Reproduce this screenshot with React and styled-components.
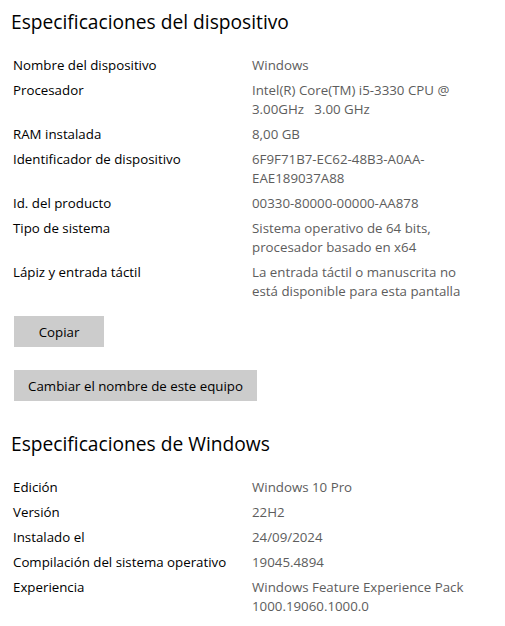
import React from 'react';
import styled, { createGlobalStyle } from 'styled-components';

const GlobalStyle = createGlobalStyle`
  html, body {
    margin: 0;
    padding: 0;
    background: #fff;
  }
  body {
    font-family: 'Open Sans', 'Noto Sans', sans-serif;
    color: #000;
  }
`;

const Page = styled.div`
  width: 505px;
  height: 626px;
  box-sizing: border-box;
  padding: 8px 0 0 13px;
  overflow: hidden;
`;

const Title = styled.h2`
  margin: ${p => p.$top}px 0 0 -2px;
  font-size: 19.2px;
  line-height: 28px;
  font-weight: 400;
`;

const SpecList = styled.dl`
  margin: ${p => p.$top}px 0 0 0;
  display: flex;
  flex-direction: column;
  gap: 6px;
  font-size: 13.3px;
  line-height: 19px;
`;

const Row = styled.div`
  display: grid;
  grid-template-columns: 239px 230px;
`;

const Label = styled.dt`
  margin: 0;
`;

const Value = styled.dd`
  margin: 0;
  color: #5d5d5d;
  white-space: pre;
`;

const Line = styled.span`
  display: block;
`;

const Button = styled.button`
  display: block;
  margin: ${p => p.$top}px 0 0 1px;
  width: ${p => p.$width}px;
  height: 31px;
  padding: 0;
  border: none;
  background: #cccccc;
  color: #000;
  font-family: inherit;
  font-size: 13.3px;
`;

const device = [
  ['Nombre del dispositivo', ['Windows']],
  ['Procesador', ['Intel(R) Core(TM) i5-3330 CPU @', '3.00GHz   3.00 GHz']],
  ['RAM instalada', ['8,00 GB']],
  ['Identificador de dispositivo', ['6F9F71B7-EC62-48B3-A0AA-', 'EAE189037A88']],
  ['Id. del producto', ['00330-80000-00000-AA878']],
  ['Tipo de sistema', ['Sistema operativo de 64 bits,', 'procesador basado en x64']],
  ['Lápiz y entrada táctil', ['La entrada táctil o manuscrita no', 'está disponible para esta pantalla']],
];

const windows = [
  ['Edición', ['Windows 10 Pro']],
  ['Versión', ['22H2']],
  ['Instalado el', ['24/09/2024']],
  ['Compilación del sistema operativo', ['19045.4894']],
  ['Experiencia', ['Windows Feature Experience Pack', '1000.19060.1000.0']],
];

const Specs = ({ items, top }) => (
  <SpecList $top={top}>
    {items.map(([label, lines]) => (
      <Row key={label}>
        <Label>{label}</Label>
        <Value>
          {lines.map(line => <Line key={line}>{line}</Line>)}
        </Value>
      </Row>
    ))}
  </SpecList>
);

const App = () => (
  <Page>
    <GlobalStyle/>
    <Title $top={0}>Especificaciones del dispositivo</Title>
    <Specs items={device} top={20}/>
    <Button $top={15} $width={90}>Copiar</Button>
    <Button $top={23} $width={243}>Cambiar el nombre de este equipo</Button>
    <Title $top={29}>Especificaciones de Windows</Title>
    <Specs items={windows} top={20}/>
  </Page>
);

export default App;
